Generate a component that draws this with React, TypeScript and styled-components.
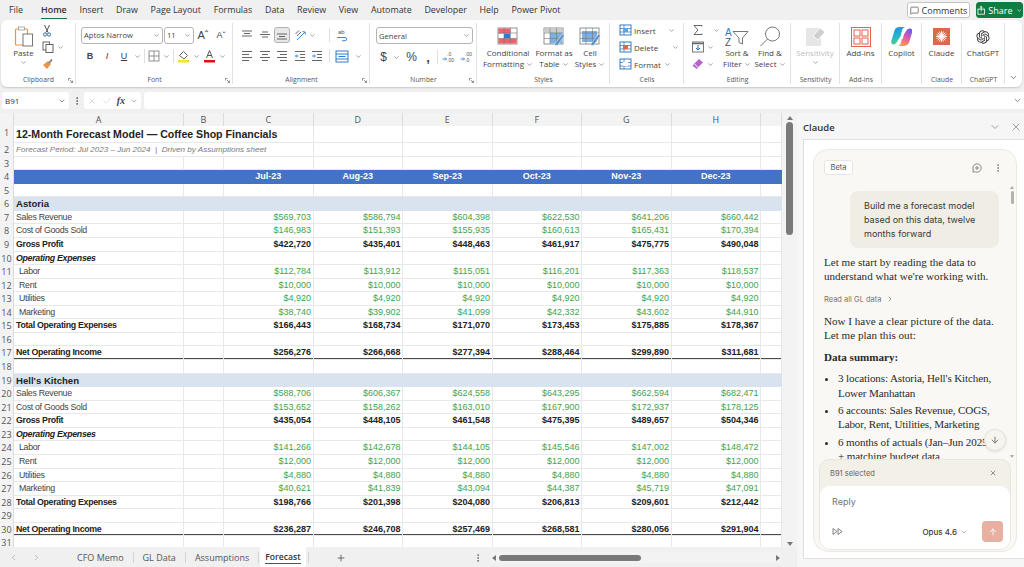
import React, { FunctionComponent, ReactNode } from "react";
import styled, { createGlobalStyle } from "styled-components";
import { RiOpenaiFill } from "react-icons/ri";
import { ChevronDown, ChevronRight, ChevronLeft, X, Check, ArrowDown, ArrowUp, Plus, MessageSquare, EllipsisVertical, MessageCirclePlus } from "lucide-react";

const GlobalStyle = createGlobalStyle`
  html, body { margin: 0; padding: 0; width: 1024px; height: 567px; overflow: hidden; background: #f0f0f0; }
  * { box-sizing: border-box; }
  #root { width: 1024px; height: 567px; font-family: "Open Sans", "Liberation Sans", sans-serif; color: #333; }
`;

const Page = styled.div`
  width: 1024px;
  height: 567px;
  display: flex;
  flex-direction: column;
  background: #f0f0f0;
  overflow: hidden;
`;

/* ---------- top tabs ---------- */
const TabsBar = styled.div`
  height: 20px;
  display: flex;
  align-items: center;
  padding: 0 1px 0 9px;
`;

const MenuTab = styled.div<{ $active?: boolean }>`
  position: relative;
  font-size: 8.9px;
  line-height: 20px;
  margin-right: 12.7px;
  color: #333;
  font-weight: ${(p) => (p.$active ? 600 : 400)};
  &:first-child {
    margin-right: 18px;
  }
  &::after {
    content: "";
    display: ${(p) => (p.$active ? "block" : "none")};
    position: absolute;
    left: 0;
    right: 0;
    bottom: 1px;
    height: 1.5px;
    background: #107c41;
  }
`;

const TopRight = styled.div`
  margin-left: auto;
  display: flex;
  gap: 6px;
`;

const CommentsButton = styled.div`
  width: 63px;
  height: 16px;
  display: flex;
  align-items: center;
  justify-content: center;
  gap: 3px;
  background: #fff;
  border: 1px solid #c4c4c4;
  border-radius: 3px;
  font-size: 9px;
`;

const ShareButton = styled(CommentsButton)`
  width: 47px;
  background: #107c41;
  border-color: #107c41;
  color: #fff;
`;

/* ---------- ribbon ---------- */
const Ribbon = styled.div`
  height: 67px;
  margin: 0 2px 0 1px;
  display: flex;
  background: #fff;
  border-radius: 6px;
  box-shadow: 0 1px 2px rgba(0, 0, 0, 0.18);
  overflow: hidden;
`;

const GroupBox = styled.div<{ $w: number }>`
  position: relative;
  width: ${(p) => p.$w}px;
  flex-shrink: 0;
  display: flex;
  flex-direction: column;
  &::after {
    content: "";
    position: absolute;
    right: 0;
    top: 3px;
    bottom: 3px;
    width: 1px;
    background: #e2e2e2;
  }
`;

const GroupBody = styled.div`
  height: 55px;
  display: flex;
`;

const GroupLabel = styled.div`
  height: 12px;
  line-height: 10px;
  text-align: center;
  font-size: 6.8px;
  color: #555;
`;

const Launcher = styled.svg`
  position: absolute;
  right: 3px;
  bottom: 4px;
  width: 5px;
  height: 5px;
`;

const Big = styled.div<{ $w: number; $ml?: number; $muted?: boolean }>`
  width: ${(p) => p.$w}px;
  margin-left: ${(p) => p.$ml ?? 0}px;
  flex-shrink: 0;
  display: flex;
  flex-direction: column;
  align-items: center;
  padding-top: 5px;
  font-size: 8px;
  line-height: 10.5px;
  text-align: center;
  white-space: nowrap;
  color: ${(p) => (p.$muted ? "#bdbdbd" : "#444")};
`;

const BigIcon = styled.div`
  height: 23px;
  display: flex;
  align-items: center;
  justify-content: center;
`;

const Stack = styled.div<{ $gap?: number; $pad?: number; $left?: number; $w?: number }>`
  ${(p) => (p.$w ? `width: ${p.$w}px; flex-shrink: 0;` : "")}
  display: flex;
  flex-direction: column;
  gap: ${(p) => p.$gap ?? 5}px;
  padding: ${(p) => p.$pad ?? 7}px 0 0 ${(p) => p.$left ?? 5}px;
`;

const IconRow = styled.div<{ $gap?: number; $left?: number }>`
  display: flex;
  align-items: center;
  gap: ${(p) => p.$gap ?? 3}px;
  height: 16px;
  padding-left: ${(p) => p.$left ?? 0}px;
  font-size: 8px;
  color: #444;
  white-space: nowrap;
`;

const Combo = styled.div<{ $w: number; $ml?: number }>`
  width: ${(p) => p.$w}px;
  margin-left: ${(p) => p.$ml ?? 0}px;
  height: 17px;
  flex-shrink: 0;
  display: flex;
  align-items: center;
  justify-content: space-between;
  padding: 0 2px;
  border: 1px solid #b5b5b5;
  border-radius: 3px;
  font-size: 7.6px;
  color: #444;
  white-space: nowrap;
`;

const Sep = styled.div<{ $ml?: number }>`
  width: 1px;
  height: 14px;
  flex-shrink: 0;
  background: #dedede;
  margin-left: ${(p) => p.$ml ?? 0}px;
`;

const Glyph = styled.span<{ $b?: boolean; $i?: boolean; $u?: boolean; $size?: number; $w?: number; $ml?: number }>`
  width: ${(p) => p.$w ?? 14}px;
  margin-left: ${(p) => p.$ml ?? 0}px;
  flex-shrink: 0;
  text-align: center;
  font-family: "Liberation Sans", sans-serif;
  font-size: ${(p) => p.$size ?? 9}px;
  font-weight: ${(p) => (p.$b ? 700 : 400)};
  font-style: ${(p) => (p.$i ? "italic" : "normal")};
  text-decoration: ${(p) => (p.$u ? "underline" : "none")};
  color: #444;
`;

const Selected = styled.div`
  width: 16px;
  height: 16px;
  margin: 0 -2px;
  display: flex;
  align-items: center;
  justify-content: center;
  background: #e8e8e8;
  border: 1px solid #b0b0b0;
  border-radius: 3px;
`;

const ChevSlot = styled.span<{ $ml?: number }>`
  display: inline-flex;
  align-items: center;
  flex-shrink: 0;
  margin-left: ${(p) => p.$ml ?? 0}px;
  vertical-align: middle;
`;

const Chev = ({ ml }: { ml?: number }) => (
  <ChevSlot $ml={ml}>
    <ChevronDown size={7} color="#666" strokeWidth={2} />
  </ChevSlot>
);

const Lines = ({ kind }: { kind: "top" | "mid" | "bot" | "l" | "c" | "r" | "in" | "out" }) => {
  const rows: Record<string, number[][]> = {
    top: [[1, 11, 2], [3, 9, 4.5], [1, 11, 7]],
    mid: [[3, 9, 3], [1, 11, 5.5], [3, 9, 8]],
    bot: [[1, 11, 5], [3, 9, 7.5], [1, 11, 10]],
    l: [[1, 11, 1.5], [1, 8, 4.5], [1, 11, 7.5], [1, 8, 10.5]],
    c: [[1, 11, 1.5], [3, 9, 4.5], [1, 11, 7.5], [3, 9, 10.5]],
    r: [[1, 11, 1.5], [4, 11, 4.5], [1, 11, 7.5], [4, 11, 10.5]],
    in: [[1, 11, 1.5], [6, 11, 4.5], [6, 11, 7.5], [1, 11, 10.5]],
    out: [[1, 11, 1.5], [6, 11, 4.5], [6, 11, 7.5], [1, 11, 10.5]],
  };
  return (
    <svg width="12" height="12" viewBox="0 0 12 12" style={{ flexShrink: 0 }}>
      {rows[kind].map((r, i) => (
        <line key={i} x1={r[0]} x2={r[1]} y1={r[2]} y2={r[2]} stroke="#555" strokeWidth="0.9" />
      ))}
      {kind === "in" && <path d="M1 6h3M3 4.5 4.5 6 3 7.5" stroke="#2b7cd3" fill="none" strokeWidth="0.9" />}
      {kind === "out" && <path d="M4.5 6h-3M3 4.5 1.5 6 3 7.5" stroke="#2b7cd3" fill="none" strokeWidth="0.9" />}
    </svg>
  );
};

const PasteIcon = () => (
  <svg width="20" height="22" viewBox="0 0 20 22">
    <rect x="1.5" y="3" width="12" height="16" rx="1" fill="#fff" stroke="#e8954a" strokeWidth="1.2" />
    <rect x="4.5" y="1" width="6" height="3" fill="#fff" stroke="#999" strokeWidth="0.8" />
    <rect x="9" y="8" width="9.5" height="12" fill="#fff" stroke="#777" strokeWidth="1" />
  </svg>
);

const ScissorsIcon = () => (
  <svg width="10" height="13" viewBox="0 0 10 13" fill="none" stroke="#3a6ea5" strokeWidth="1">
    <path d="M2.5 1 6 8.5M7.5 1 4 8.5" stroke="#555" />
    <circle cx="3" cy="10.5" r="1.6" />
    <circle cx="7" cy="10.5" r="1.6" />
  </svg>
);

const CopyIcon = () => (
  <svg width="12" height="12" viewBox="0 0 12 12" fill="#fff" stroke="#555" strokeWidth="0.9">
    <rect x="1" y="1" width="6.5" height="8" />
    <rect x="4" y="3.5" width="7" height="8" />
  </svg>
);

const BrushIcon = () => (
  <svg width="12" height="12" viewBox="0 0 12 12">
    <path d="M1 7 6 3l3 3-4 5z" fill="#e8954a" />
    <path d="M7 5l3-3.5" stroke="#777" strokeWidth="1.6" />
  </svg>
);

const BordersIcon = () => (
  <svg width="12" height="12" viewBox="0 0 12 12" fill="none" stroke="#777" strokeWidth="0.8" style={{ flexShrink: 0 }}>
    <rect x="1" y="1" width="10" height="10" />
    <path d="M6 1v10M1 6h10" />
  </svg>
);

const FillIcon = () => (
  <svg width="13" height="14" viewBox="0 0 13 14" style={{ flexShrink: 0 }}>
    <path d="M2.5 6.5 6.5 2.5l4 4-3.5 3.5z" fill="#fff" stroke="#555" strokeWidth="0.9" />
    <rect x="1" y="11" width="11" height="2.5" fill="#f5e625" />
  </svg>
);

const FontColorIcon = () => (
  <svg width="13" height="14" viewBox="0 0 13 14" style={{ flexShrink: 0 }}>
    <path d="M3.5 9 6.5 1.5 9.5 9M4.5 6.5h4" fill="none" stroke="#555" strokeWidth="1" />
    <rect x="1" y="11" width="11" height="2.5" fill="#e60f0f" />
  </svg>
);

const OrientIcon = () => (
  <svg width="13" height="12" viewBox="0 0 13 12" fill="none" strokeWidth="0.9" style={{ flexShrink: 0 }}>
    <path d="M3 11 11 3M8.5 2.5 11 3l.5 2.5" stroke="#2b7cd3" />
    <path d="M1.5 5 5 1.5M3 7l4-4" stroke="#555" />
  </svg>
);

const WrapIcon = () => (
  <svg width="14" height="14" viewBox="0 0 14 14" style={{ flexShrink: 0 }}>
    <text x="3" y="6" fontSize="6" fill="#555" fontFamily="Liberation Sans">ab</text>
    <path d="M2 9.5h8a1.6 1.6 0 0 1 0 3.2H7" fill="none" stroke="#2b7cd3" strokeWidth="0.9" />
  </svg>
);

const MergeIcon = () => (
  <svg width="14" height="13" viewBox="0 0 14 13" style={{ flexShrink: 0 }}>
    <rect x="1" y="1" width="12" height="11" fill="#fff" stroke="#1f6fbf" strokeWidth="0.9" />
    <path d="M1 4h12M1 9h12" stroke="#1f6fbf" strokeWidth="0.9" />
    <path d="M3.5 6.5h7" stroke="#2b7cd3" strokeWidth="1" />
  </svg>
);

const DecimalIcon = ({ more }: { more?: boolean }) => (
  <svg width="14" height="12" viewBox="0 0 14 12" style={{ flexShrink: 0 }}>
    <text x="5" y="5" fontSize="5" fill="#555" fontFamily="Liberation Sans">{more ? ".00" : ".0"}</text>
    <text x="5" y="11" fontSize="5" fill="#555" fontFamily="Liberation Sans">{more ? ".0" : ".00"}</text>
    <path d="M0.5 8h4M3 6.5 4.5 8 3 9.5" stroke="#2b7cd3" fill="none" strokeWidth="0.8" />
  </svg>
);

const GridFormatIcon = ({ variant }: { variant: "cond" | "table" | "cell" }) => (
  <svg width="22" height="19" viewBox="0 0 22 19">
    <rect x="1" y="1" width="19" height="16" fill="#fff" stroke="#777" strokeWidth="0.8" />
    {variant === "cond" && (
      <>
        <rect x="1.5" y="1.5" width="12" height="5" fill="#f0616d" />
        <rect x="7" y="6.5" width="6" height="5" fill="#2b7cd3" />
        <rect x="1.5" y="11.5" width="18" height="5" fill="#f0616d" />
      </>
    )}
    {variant === "table" && (
      <>
        <rect x="1.5" y="1.5" width="18" height="4" fill="#ccc" />
        <rect x="7" y="5.5" width="12" height="11" fill="#7db0e8" />
      </>
    )}
    {variant === "cell" && <rect x="3" y="4" width="15" height="11" fill="#7db0e8" />}
    <path d="M1 6h19M1 11.5h19M7 1v16M13.5 1v16" stroke="#777" strokeWidth="0.6" />
    {variant !== "cond" && <path d="M11 18 19.5 7l2 1.4L14.5 18.5z" fill="#5b8fc7" stroke="#fff" strokeWidth="0.5" />}
  </svg>
);

const CellsIcon = ({ color }: { color: string }) => (
  <svg width="13" height="12" viewBox="0 0 13 12" style={{ flexShrink: 0 }}>
    <rect x="1" y="1" width="11" height="10" fill="#fff" stroke="#1f6fbf" strokeWidth="0.9" />
    <path d="M1 4.5h11M1 8h11M5 1v10" stroke="#1f6fbf" strokeWidth="0.7" />
    <rect x="4" y="4" width="5" height="4" fill={color} />
  </svg>
);

const SumIcon = () => (
  <svg width="12" height="12" viewBox="0 0 12 12" fill="none" stroke="#555" strokeWidth="0.9">
    <path d="M10 2.5V1.5H2l4 4.5-4 4.5h8v-1" />
  </svg>
);

const FillDownIcon = () => (
  <svg width="12" height="12" viewBox="0 0 12 12">
    <rect x="0.5" y="1" width="11" height="10" fill="#fff" stroke="#666" strokeWidth="0.9" />
    <path d="M0.5 2.5h11" stroke="#666" strokeWidth="1.4" />
    <path d="M6 4v5M4 7l2 2 2-2" stroke="#1f6fbf" fill="none" strokeWidth="1" />
  </svg>
);

const EraserIcon = () => (
  <svg width="12" height="12" viewBox="0 0 12 12">
    <path d="M0.5 7.5 7 1l4 3.5L4.5 11z" fill="#b565c9" />
    <path d="M2.5 6 6 9.5" stroke="#fff" strokeWidth="1" />
  </svg>
);

const SortIcon = () => (
  <svg width="24" height="21" viewBox="0 0 24 21">
    <text x="0" y="9.5" fontSize="10" fill="#2b7cd3" fontFamily="Liberation Sans">A</text>
    <text x="0" y="20" fontSize="10" fill="#555" fontFamily="Liberation Sans">Z</text>
    <path d="M8 5.5h15l-5.5 6.5v6l-3.5-1.5V12z" fill="#fff" stroke="#666" strokeWidth="0.9" />
  </svg>
);

const FindIcon = () => (
  <svg width="22" height="21" viewBox="0 0 22 21" fill="none" stroke="#666" strokeWidth="0.9">
    <circle cx="13.5" cy="8" r="7" />
    <path d="M8.5 13 1.5 20" />
  </svg>
);

const SensitivityIcon = () => (
  <svg width="21" height="21" viewBox="0 0 21 21">
    <rect x="1" y="2" width="15" height="18" fill="#e6e6e6" />
    <path d="M8 10 15 2l5 4-7 8z" fill="#cfcfcf" stroke="#fff" strokeWidth="0.8" />
  </svg>
);

const AddinsIcon = () => (
  <svg width="20" height="20" viewBox="0 0 20 20" fill="none" stroke="#e0654a" strokeWidth="1">
    <rect x="0.5" y="0.5" width="19" height="19" />
    <rect x="3" y="3" width="6" height="6" />
    <rect x="11" y="3" width="6" height="6" />
    <rect x="3" y="11" width="6" height="6" />
    <rect x="11" y="11" width="6" height="6" />
  </svg>
);

const CopilotIcon = () => (
  <svg width="21" height="21" viewBox="0 0 21 21">
    <defs>
      <linearGradient id="cpA" x1="0.2" y1="0" x2="0.5" y2="1">
        <stop offset="0" stopColor="#1b8fe8" />
        <stop offset="0.6" stopColor="#2cb9c9" />
        <stop offset="1" stopColor="#5fd36a" />
      </linearGradient>
      <linearGradient id="cpB" x1="0.7" y1="0" x2="0.3" y2="1">
        <stop offset="0" stopColor="#6a5cf0" />
        <stop offset="0.5" stopColor="#e45aa8" />
        <stop offset="1" stopColor="#f7a33a" />
      </linearGradient>
    </defs>
    <path d="M8.5 1h5.5c-1.6.4-2.6 1.6-3 3.5l-1.5 6-4 6c-.8 1.3-1.8 2-3.3 2C.6 18.5-.2 16.5.5 14.5L3.5 4.5C4.2 2.3 6 1 8.5 1z" fill="url(#cpA)" />
    <path d="M12.5 20H7c1.6-.4 2.6-1.6 3-3.5l1.5-6 4-6c.8-1.3 1.8-2 3.3-2 2.2 0 3 2 2.3 4l-3 10C17 18.7 15 20 12.5 20z" fill="url(#cpB)" />
    <path d="M10.5 8h2.5l-1.2 5H9.3z" fill="#fff" opacity="0.9" />
  </svg>
);

const ClaudeIcon = () => (
  <svg width="17" height="17" viewBox="0 0 17 17">
    <rect width="17" height="17" fill="#d9694a" />
    <g stroke="#fff" strokeWidth="0.9" strokeLinecap="round">
      {[0, 22, 45, 68, 90, 112, 135, 158].map((a) => (
        <line key={a} x1="8.5" y1="3.5" x2="8.5" y2="13.5" transform={`rotate(${a} 8.5 8.5)`} />
      ))}
    </g>
  </svg>
);

const SendAheadIcon = () => (
  <svg width="11" height="9" viewBox="0 0 11 9" fill="none" stroke="#77746c" strokeWidth="0.9">
    <path d="M1 1.5v6L5 4.5zM6 1.5v6l4-3z" />
  </svg>
);

const LaunchGlyph = () => (
  <Launcher viewBox="0 0 5 5" fill="none" stroke="#666" strokeWidth="0.7">
    <path d="M0.5 2.5v-2h2M2 2l2.5 2.5M2.5 4.6h2v-2" />
  </Launcher>
);

type GroupProps = { w: number; label?: string; launcher?: boolean; children: ReactNode };

const Group: FunctionComponent<GroupProps> = ({ w, label, launcher, children }) => (
  <GroupBox $w={w}>
    <GroupBody>{children}</GroupBody>
    <GroupLabel>{label}</GroupLabel>
    {launcher && <LaunchGlyph />}
  </GroupBox>
);

const CollapseSlot = styled.div`
  flex: 1;
  display: flex;
  align-items: flex-end;
  justify-content: center;
  padding-bottom: 5px;
`;

/* ---------- formula bar ---------- */
const FormulaBar = styled.div`
  height: 17px;
  margin-top: 5px;
  display: flex;
  align-items: stretch;
  padding-left: 2px;
`;

const NameBox = styled.div`
  width: 67px;
  display: flex;
  align-items: center;
  justify-content: space-between;
  padding: 0 3px;
  background: #fff;
  border-radius: 3px;
  font-size: 8px;
  color: #333;
`;

const Dots = styled.div`
  width: 15px;
  display: flex;
  align-items: center;
  justify-content: center;
`;

const FxBox = styled.div`
  width: 57px;
  display: flex;
  align-items: center;
  gap: 5px;
  padding: 0 3px;
  background: #fff;
  border-radius: 3px;
`;

const FxLabel = styled.span`
  font-family: "Liberation Serif", serif;
  font-style: italic;
  font-weight: 700;
  font-size: 10px;
  color: #444;
`;

const FormulaInput = styled.div`
  flex: 1;
  margin-left: 3px;
  display: flex;
  align-items: center;
  justify-content: flex-end;
  padding-right: 2px;
  background: #fff;
  border-radius: 3px 0 0 3px;
`;

/* ---------- main area ---------- */
const Main = styled.div`
  flex: 1;
  margin-top: 4px;
  display: flex;
  min-height: 0;
`;

const SheetColumn = styled.div`
  width: 797px;
  display: flex;
  flex-direction: column;
`;

const SheetWrap = styled.div`
  height: 434px;
  display: flex;
  background: #fff;
`;

const SheetGrid = styled.div`
  width: 782px;
  display: flex;
  flex-direction: column;
  overflow: hidden;
`;

const COLUMNS = "14px 170px 40px 89.5px 89.5px 89.5px 89.5px 89.5px 89.5px 21px";

const RowLine = styled.div<{ $h?: number; $bg?: string; $thick?: boolean }>`
  height: ${(p) => p.$h ?? 13.57}px;
  flex-shrink: 0;
  display: grid;
  grid-template-columns: ${COLUMNS};
  background: ${(p) => p.$bg ?? "#fff"};
  box-shadow: ${(p) => (p.$thick ? "inset 0 -2px 0 #4a4a4a" : "none")};
`;

const ColHead = styled.div`
  background: #f3f3f3;
  border-right: 1px solid #dcdcdc;
  border-bottom: 1px solid #d0d0d0;
  text-align: center;
  font-size: 9px;
  line-height: 13px;
  color: #555;
`;

const RowNum = styled.div`
  background: #f3f3f3;
  border-right: 1px solid #dcdcdc;
  text-align: center;
  font-size: 9px;
  line-height: 13.5px;
  color: #555;
  white-space: nowrap;
  overflow: hidden;
`;

const Cell = styled.div<{
  $b?: boolean;
  $i?: boolean;
  $right?: boolean;
  $center?: boolean;
  $label?: boolean;
  $size?: number;
  $color?: string;
  $fill?: boolean;
  $indent?: number;
  $span?: number;
}>`
  grid-column: span ${(p) => p.$span ?? 1};
  padding: 0 ${(p) => (p.$right ? 1.5 : 2)}px 0 ${(p) => 2 + (p.$indent ?? 0)}px;
  border-right: 1px solid ${(p) => (p.$fill ? "transparent" : "#e8e8e8")};
  border-bottom: 1px solid ${(p) => (p.$fill ? "transparent" : "#e8e8e8")};
  font-family: "Liberation Sans", sans-serif;
  font-size: ${(p) => p.$size ?? (p.$label ? 8.8 : 9)}px;
  letter-spacing: ${(p) => (p.$label ? -0.3 : 0)}px;
  line-height: 13px;
  font-weight: ${(p) => (p.$b ? 700 : 400)};
  font-style: ${(p) => (p.$i ? "italic" : "normal")};
  text-align: ${(p) => (p.$right ? "right" : p.$center ? "center" : "left")};
  color: ${(p) => p.$color ?? "#333"};
  white-space: nowrap;
  overflow: hidden;
`;

const TitleText = styled.span`
  font-size: 10.6px;
  font-weight: 700;
  line-height: 17px;
  color: #222;
`;

const SubtitleText = styled.span`
  font-size: 8.1px;
  font-style: italic;
  color: #7a7a7a;
  white-space: pre;
`;

const VScroll = styled.div`
  width: 15px;
  display: flex;
  flex-direction: column;
  align-items: center;
  background: #f3f3f3;
  padding: 3px 2px 1px;
`;

const ScrollArrow = styled.div<{ $dir: "up" | "down" | "left" | "right" }>`
  width: 0;
  height: 0;
  flex-shrink: 0;
  border-style: solid;
  border-color: transparent;
  border-width: 3px;
  ${(p) =>
    p.$dir === "up"
      ? "border-bottom: 4px solid #777; border-top-width: 0;"
      : p.$dir === "down"
        ? "border-top: 4px solid #777; border-bottom-width: 0;"
        : p.$dir === "left"
          ? "border-right: 4px solid #777; border-left-width: 0;"
          : "border-left: 4px solid #777; border-right-width: 0;"}
`;

const VThumb = styled.div`
  width: 7px;
  height: 113px;
  margin-top: 2px;
  background: #7a7a7a;
  border-radius: 4px;
`;

const VSpacer = styled.div`
  flex: 1;
`;

const SheetTabs = styled.div`
  height: 21px;
  display: flex;
  align-items: stretch;
  padding-left: 9px;
  font-size: 9px;
  color: #555;
`;

const NavArrows = styled.div`
  width: 59px;
  display: flex;
  align-items: center;
  gap: 14px;
  flex-shrink: 0;
`;

const SheetTab = styled.div<{ $active?: boolean }>`
  position: relative;
  height: ${(p) => (p.$active ? 20 : 21)}px;
  display: flex;
  align-items: center;
  padding: 0 ${(p) => (p.$active ? 5 : 9)}px;
  margin-left: ${(p) => (p.$active ? 1 : 0)}px;
  background: ${(p) => (p.$active ? "#fff" : "transparent")};
  border-radius: 0 0 3px 3px;
  font-weight: ${(p) => (p.$active ? 600 : 400)};
  font-size: ${(p) => (p.$active ? 8.6 : 9)}px;
  color: ${(p) => (p.$active ? "#333" : "#555")};
  white-space: nowrap;
  &::after {
    content: "";
    display: ${(p) => (p.$active ? "block" : "none")};
    position: absolute;
    left: 5px;
    right: 5px;
    bottom: 3px;
    height: 1.5px;
    background: #107c41;
  }
`;

const TabSep = styled.div<{ $ml?: number }>`
  width: 1px;
  height: 11px;
  margin: 5px 0 0 ${(p) => p.$ml ?? 0}px;
  background: #d4d4d4;
`;

const AddSheet = styled.div`
  width: 64px;
  display: flex;
  align-items: center;
  justify-content: center;
`;

const TabDots = styled.div`
  margin-left: auto;
  width: 14px;
  display: flex;
  align-items: center;
  justify-content: center;
`;

const HScroll = styled.div`
  width: 290px;
  height: 11px;
  margin: 5px 16px 0 6px;
  display: flex;
  align-items: center;
  padding: 0 1px;
  background: #f3f3f3;
`;

const HThumb = styled.div`
  width: 142px;
  height: 6px;
  margin-left: 3px;
  background: #7a7a7a;
  border-radius: 3px;
`;

/* ---------- claude panel ---------- */
const Panel = styled.div`
  flex: 1;
  display: flex;
  flex-direction: column;
  background: #f6f6f6;
  padding-left: 6px;
`;

const PanelHead = styled.div`
  height: 26px;
  display: flex;
  align-items: center;
  gap: 9px;
  padding: 2px 2px 0 0;
  font-size: 9.5px;
  font-weight: 600;
  color: #333;
`;

const PanelTitle = styled.div`
  flex: 1;
`;

const PanelBody = styled.div`
  height: 420px;
  padding: 9px 7px 7px 9px;
  background: #fff;
  border: 1px solid #e0e0e0;
  border-right: none;
`;

const ChatCard = styled.div`
  position: relative;
  height: 403px;
  display: flex;
  flex-direction: column;
  background: #faf8f5;
  border: 1px solid #ece9e1;
  border-radius: 15px;
  overflow: hidden;
`;

const ChatHead = styled.div`
  height: 35px;
  flex-shrink: 0;
  display: flex;
  align-items: center;
  justify-content: space-between;
  padding: 0 13px 0 10px;
`;

const BetaChip = styled.div`
  width: 29px;
  height: 15px;
  display: flex;
  align-items: center;
  justify-content: center;
  background: #fff;
  border: 1px solid #e8e5dc;
  border-radius: 3px;
  font-family: "Inter", sans-serif;
  font-size: 7.5px;
  color: #555;
`;

const ChatHeadIcons = styled.div`
  display: flex;
  align-items: center;
  gap: 11px;
`;

const ChatScroll = styled.div`
  position: relative;
  height: 274px;
  flex-shrink: 0;
  padding: 6px 10px 0;
  overflow: hidden;
`;

const Bubble = styled.div`
  width: 149px;
  height: 57px;
  margin-left: 26px;
  padding: 8px 14px;
  background: #f0ede4;
  border-radius: 8px;
  font-family: "Inter", sans-serif;
  font-size: 9px;
  line-height: 13.8px;
  color: #3a3a36;
`;

const Prose = styled.p<{ $top?: number; $b?: boolean }>`
  margin: ${(p) => p.$top ?? 0}px 0 0;
  font-family: "Liberation Serif", serif;
  font-size: 11.1px;
  line-height: 14.3px;
  font-weight: ${(p) => (p.$b ? 700 : 400)};
  color: #2b2a27;
  white-space: nowrap;
`;

const ToolLink = styled.div`
  margin-top: 11px;
  display: flex;
  align-items: center;
  gap: 5px;
  font-family: "Inter", sans-serif;
  font-size: 7.5px;
  color: #77746c;
`;

const BulletList = styled.ul`
  margin: 7px 0 0;
  padding: 0 0 0 14px;
  font-family: "Liberation Serif", serif;
  font-size: 11.1px;
  letter-spacing: -0.13px;
  line-height: 14.3px;
  color: #2b2a27;
  white-space: nowrap;
`;

const BulletItem = styled.li`
  margin-bottom: 3px;
`;

const MiniScrollbar = styled.div`
  position: absolute;
  right: 2px;
  top: 0;
  bottom: 0;
  width: 4px;
  display: flex;
  flex-direction: column;
  align-items: center;
  padding: 1px 0;
`;

const MiniThumb = styled.div`
  width: 3px;
  height: 13px;
  margin-top: 2px;
  background: #b5b2aa;
  border-radius: 2px;
`;

const MiniArrow = styled.div<{ $down?: boolean }>`
  border-left: 2px solid transparent;
  border-right: 2px solid transparent;
  ${(p) => (p.$down ? "border-top: 3px solid #aaa;" : "border-bottom: 3px solid #aaa;")}
`;

const ScrollDown = styled.div`
  position: absolute;
  right: 10px;
  bottom: 8px;
  width: 22px;
  height: 22px;
  display: flex;
  align-items: center;
  justify-content: center;
  background: #f7f5f0;
  border: 1px solid #e6e3da;
  border-radius: 50%;
  box-shadow: 0 1px 3px rgba(0, 0, 0, 0.1);
`;

const Composer = styled.div`
  margin: 0 5px;
  height: 91px;
  display: flex;
  flex-direction: column;
  background: #f3f0e8;
  border: 1px solid #e9e6dd;
  border-radius: 10px 10px 12px 12px;
`;

const ContextRow = styled.div`
  height: 26px;
  flex-shrink: 0;
  display: flex;
  align-items: center;
  justify-content: space-between;
  padding: 0 13px 0 10px;
  font-family: "Inter", sans-serif;
  font-size: 7.5px;
  color: #66635b;
`;

const InputCard = styled.div`
  flex: 1;
  display: flex;
  flex-direction: column;
  background: #fff;
  border-radius: 10px;
  padding: 10px 7px 7px 12px;
`;

const ReplyHint = styled.div`
  flex: 1;
  font-family: "Inter", sans-serif;
  font-size: 9px;
  color: #77746c;
`;

const InputTools = styled.div`
  display: flex;
  align-items: center;
  justify-content: space-between;
`;

const ModelGroup = styled.div`
  margin-left: auto;
  margin-right: 14px;
  display: flex;
  align-items: center;
  gap: 3px;
  font-family: "Inter", sans-serif;
  font-size: 8px;
  font-weight: 500;
  color: #3a3a36;
`;

const SendButton = styled.div`
  width: 21px;
  height: 21px;
  display: flex;
  align-items: center;
  justify-content: center;
  background: #e8b0a0;
  border-radius: 4px;
`;

const menuTabs = ["File", "Home", "Insert", "Draw", "Page Layout", "Formulas", "Data", "Review", "View", "Automate", "Developer", "Help", "Power Pivot"];
const months = ["Jul-23", "Aug-23", "Sep-23", "Oct-23", "Nov-23", "Dec-23"];
const letters = ["A", "B", "C", "D", "E", "F", "G", "H", ""];

type SheetRow =
  | { kind: "blank"; thick?: boolean }
  | { kind: "title" }
  | { kind: "subtitle" }
  | { kind: "months" }
  | { kind: "section"; label: string }
  | { kind: "heading"; label: string }
  | { kind: "data"; label: string; values: number[]; bold?: boolean; indent?: boolean; thick?: boolean };

const flat = (n: number) => [n, n, n, n, n, n];

const locationRows = (name: string, r: number[][]): SheetRow[] => [
  { kind: "section", label: name },
  { kind: "data", label: "Sales Revenue", values: r[0] },
  { kind: "data", label: "Cost of Goods Sold", values: r[1] },
  { kind: "data", label: "Gross Profit", values: r[2], bold: true },
  { kind: "heading", label: "Operating Expenses" },
  { kind: "data", label: "Labor", values: r[3], indent: true },
  { kind: "data", label: "Rent", values: r[4], indent: true },
  { kind: "data", label: "Utilities", values: r[5], indent: true },
  { kind: "data", label: "Marketing", values: r[6], indent: true },
  { kind: "data", label: "Total Operating Expenses", values: r[7], bold: true },
  { kind: "blank" },
  { kind: "data", label: "Net Operating Income", values: r[8], bold: true, thick: true },
];

const sheetRows: SheetRow[] = [
  { kind: "title" },
  { kind: "subtitle" },
  { kind: "blank" },
  { kind: "months" },
  { kind: "blank" },
  ...locationRows("Astoria", [
    [569703, 586794, 604398, 622530, 641206, 660442],
    [146983, 151393, 155935, 160613, 165431, 170394],
    [422720, 435401, 448463, 461917, 475775, 490048],
    [112784, 113912, 115051, 116201, 117363, 118537],
    flat(10000),
    flat(4920),
    [38740, 39902, 41099, 42332, 43602, 44910],
    [166443, 168734, 171070, 173453, 175885, 178367],
    [256276, 266668, 277394, 288464, 299890, 311681],
  ]),
  { kind: "blank" },
  ...locationRows("Hell's Kitchen", [
    [588706, 606367, 624558, 643295, 662594, 682471],
    [153652, 158262, 163010, 167900, 172937, 178125],
    [435054, 448105, 461548, 475395, 489657, 504346],
    [141266, 142678, 144105, 145546, 147002, 148472],
    flat(12000),
    flat(4880),
    [40621, 41839, 43094, 44387, 45719, 47091],
    [198766, 201398, 204080, 206813, 209601, 212442],
    [236287, 246708, 257469, 268581, 280056, 291904],
  ]),
  { kind: "blank" },
];

const money = (n: number) => "$" + n.toLocaleString("en-US");

const renderRow = (row: SheetRow, i: number) => {
  const num = <RowNum>{i + 1}</RowNum>;
  switch (row.kind) {
    case "title":
      return (
        <RowLine key={i} $h={17}>
          {num}
          <Cell $span={3}>
            <TitleText>12-Month Forecast Model — Coffee Shop Financials</TitleText>
          </Cell>
          {letters.slice(3).map((l, k) => (
            <Cell key={k} />
          ))}
        </RowLine>
      );
    case "subtitle":
      return (
        <RowLine key={i}>
          {num}
          <Cell $span={3}>
            <SubtitleText>Forecast Period: Jul 2023 – Jun 2024  |  Driven by Assumptions sheet</SubtitleText>
          </Cell>
          {letters.slice(3).map((l, k) => (
            <Cell key={k} />
          ))}
        </RowLine>
      );
    case "months":
      return (
        <RowLine key={i} $bg="#4472c4">
          {num}
          <Cell $fill />
          <Cell $fill />
          {months.map((m) => (
            <Cell key={m} $fill $b $center $color="#fff">
              {m}
            </Cell>
          ))}
          <Cell $fill />
        </RowLine>
      );
    case "section":
      return (
        <RowLine key={i} $bg="#d9e2ef">
          {num}
          <Cell $fill $b $size={9.6} $color="#222">
            {row.label}
          </Cell>
          {letters.slice(1).map((l, k) => (
            <Cell key={k} $fill />
          ))}
        </RowLine>
      );
    case "heading":
      return (
        <RowLine key={i}>
          {num}
          <Cell $b $i $label $color="#222">
            {row.label}
          </Cell>
          {letters.slice(1).map((l, k) => (
            <Cell key={k} />
          ))}
        </RowLine>
      );
    case "data":
      return (
        <RowLine key={i} $thick={row.thick}>
          {num}
          <Cell $b={row.bold} $label $indent={row.indent ? 3 : 0} $color={row.bold ? "#222" : "#444"}>
            {row.label}
          </Cell>
          <Cell />
          {row.values.map((v, k) => (
            <Cell key={k} $right $b={row.bold} $color={row.bold ? "#222" : "#3fa34d"}>
              {money(v)}
            </Cell>
          ))}
          <Cell />
        </RowLine>
      );
    default:
      return (
        <RowLine key={i}>
          {num}
          {letters.map((l, k) => (
            <Cell key={k} />
          ))}
        </RowLine>
      );
  }
};

const App: FunctionComponent = () => {
  return (
    <Page>
      <GlobalStyle />
      <TabsBar>
        {menuTabs.map((t) => (
          <MenuTab key={t} $active={t === "Home"}>
            {t}
          </MenuTab>
        ))}
        <TopRight>
          <CommentsButton>
            <MessageSquare size={9} color="#555" />
            Comments
          </CommentsButton>
          <ShareButton>
            <svg width="9" height="10" viewBox="0 0 9 10" fill="none" stroke="#fff" strokeWidth="0.9">
              <rect x="1" y="4" width="7" height="5.5" />
              <path d="M4.5 6.5V1M3 2.5 4.5 1 6 2.5" />
            </svg>
            Share
            <ChevronDown size={7} color="#fff" />
          </ShareButton>
        </TopRight>
      </TabsBar>

      <Ribbon>
        <Group w={75} label="Clipboard" launcher>
          <Big $w={37} $ml={4}>
            <BigIcon>
              <PasteIcon />
            </BigIcon>
            Paste
            <Chev />
          </Big>
          <Stack $gap={1} $pad={2} $left={0}>
            <IconRow>
              <ScissorsIcon />
            </IconRow>
            <IconRow>
              <CopyIcon />
              <Chev />
            </IconRow>
            <IconRow>
              <BrushIcon />
            </IconRow>
          </Stack>
        </Group>
        <Group w={157} label="Font" launcher>
          <Stack>
            <IconRow $gap={1}>
              <Combo $w={82}>
                Aptos Narrow
                <Chev />
              </Combo>
              <Combo $w={30}>
                11
                <Chev />
              </Combo>
              <Glyph $size={11} $w={16}>Aˆ</Glyph>
              <Glyph $size={9} $w={14} $ml={2}>Aˇ</Glyph>
            </IconRow>
            <IconRow $gap={3} $left={2}>
              <Glyph $b>B</Glyph>
              <Glyph $i>I</Glyph>
              <Glyph $u>U</Glyph>
              <Chev />
              <Sep />
              <BordersIcon />
              <Chev />
              <Sep />
              <FillIcon />
              <Chev />
              <FontColorIcon />
              <Chev />
            </IconRow>
          </Stack>
        </Group>
        <Group w={137} label="Alignment" launcher>
          <Stack>
            <IconRow $gap={5.5} $left={3}>
              <Lines kind="top" />
              <Lines kind="mid" />
              <Selected>
                <Lines kind="bot" />
              </Selected>
              <OrientIcon />
              <Chev ml={-3} />
              <Sep $ml={7} />
              <WrapIcon />
            </IconRow>
            <IconRow $gap={5.5} $left={3}>
              <Lines kind="l" />
              <Lines kind="c" />
              <Lines kind="r" />
              <Lines kind="out" />
              <Lines kind="in" />
              <Sep />
              <MergeIcon />
              <Chev />
            </IconRow>
          </Stack>
        </Group>
        <Group w={107} label="Number" launcher>
          <Stack>
            <Combo $w={97} $ml={1}>
              General
              <Chev />
            </Combo>
            <IconRow $gap={4} $left={3}>
              <Glyph $size={12} $w={11}>$</Glyph>
              <Chev />
              <Glyph $size={12} $w={15}>%</Glyph>
              <Glyph $b $size={13} $w={10}>,</Glyph>
              <Sep />
              <DecimalIcon />
              <DecimalIcon more />
            </IconRow>
          </Stack>
        </Group>
        <Group w={133} label="Styles">
          <Big $w={56} $ml={3}>
            <BigIcon>
              <GridFormatIcon variant="cond" />
            </BigIcon>
            Conditional
            <br />
            <span>
              Formatting <Chev />
            </span>
          </Big>
          <Big $w={36}>
            <BigIcon>
              <GridFormatIcon variant="table" />
            </BigIcon>
            Format as
            <br />
            <span>
              Table <Chev />
            </span>
          </Big>
          <Big $w={36}>
            <BigIcon>
              <GridFormatIcon variant="cell" />
            </BigIcon>
            Cell
            <br />
            <span>
              Styles <Chev />
            </span>
          </Big>
        </Group>
        <Group w={74} label="Cells">
          <Stack $gap={1} $pad={2} $left={9}>
            <IconRow $gap={2}>
              <CellsIcon color="#5ba4e6" />
              Insert
              <Chev ml={10} />
            </IconRow>
            <IconRow $gap={2}>
              <CellsIcon color="#e0654a" />
              Delete
              <Chev ml={12} />
            </IconRow>
            <IconRow $gap={2}>
              <CellsIcon color="#fff" />
              Format
              <Chev ml={1} />
            </IconRow>
          </Stack>
        </Group>
        <Group w={107} label="Editing">
          <Stack $gap={1} $pad={2} $left={8} $w={37}>
            <IconRow>
              <SumIcon />
              <Chev ml={6} />
            </IconRow>
            <IconRow>
              <FillDownIcon />
              <Chev />
            </IconRow>
            <IconRow>
              <EraserIcon />
              <Chev />
            </IconRow>
          </Stack>
          <Big $w={32}>
            <BigIcon>
              <SortIcon />
            </BigIcon>
            Sort &amp;
            <br />
            <span>
              Filter <Chev />
            </span>
          </Big>
          <Big $w={34}>
            <BigIcon>
              <FindIcon />
            </BigIcon>
            Find &amp;
            <br />
            <span>
              Select <Chev />
            </span>
          </Big>
        </Group>
        <Group w={49} label="Sensitivity">
          <Big $w={48} $muted>
            <BigIcon>
              <SensitivityIcon />
            </BigIcon>
            Sensitivity
            <Chev />
          </Big>
        </Group>
        <Group w={42} label="Add-ins">
          <Big $w={41}>
            <BigIcon>
              <AddinsIcon />
            </BigIcon>
            Add-ins
          </Big>
        </Group>
        <Group w={40}>
          <Big $w={39}>
            <BigIcon>
              <CopilotIcon />
            </BigIcon>
            Copilot
          </Big>
        </Group>
        <Group w={40} label="Claude">
          <Big $w={39}>
            <BigIcon>
              <ClaudeIcon />
            </BigIcon>
            Claude
          </Big>
        </Group>
        <Group w={43} label="ChatGPT">
          <Big $w={42}>
            <BigIcon>
              <RiOpenaiFill size={16} color="#333" />
            </BigIcon>
            ChatGPT
          </Big>
        </Group>
        <CollapseSlot>
          <ChevronDown size={9} color="#555" />
        </CollapseSlot>
      </Ribbon>

      <FormulaBar>
        <NameBox>
          B91
          <ChevronDown size={8} color="#555" />
        </NameBox>
        <Dots>
          <EllipsisVertical size={10} color="#555" />
        </Dots>
        <FxBox>
          <X size={10} color="#bbb" strokeWidth={1.2} />
          <Check size={10} color="#bbb" strokeWidth={1.2} />
          <FxLabel>fx</FxLabel>
          <ChevronDown size={8} color="#888" />
        </FxBox>
        <FormulaInput>
          <ChevronDown size={9} color="#666" />
        </FormulaInput>
      </FormulaBar>

      <Main>
        <SheetColumn>
          <SheetWrap>
            <SheetGrid>
              <RowLine $h={13}>
                <ColHead />
                {letters.map((l, i) => (
                  <ColHead key={i}>{l}</ColHead>
                ))}
              </RowLine>
              {sheetRows.map(renderRow)}
            </SheetGrid>
            <VScroll>
              <ScrollArrow $dir="up" />
              <VThumb />
              <VSpacer />
              <ScrollArrow $dir="down" />
            </VScroll>
          </SheetWrap>
          <SheetTabs>
            <NavArrows>
              <ChevronLeft size={9} color="#aaa" />
              <ChevronRight size={9} color="#aaa" />
            </NavArrows>
            <SheetTab>CFO Memo</SheetTab>
            <TabSep />
            <SheetTab>GL Data</SheetTab>
            <TabSep />
            <SheetTab>Assumptions</SheetTab>
            <TabSep />
            <SheetTab $active>Forecast</SheetTab>
            <TabSep $ml={2} />
            <AddSheet>
              <Plus size={10} color="#555" />
            </AddSheet>
            <TabDots>
              <EllipsisVertical size={10} color="#666" />
            </TabDots>
            <HScroll>
              <ScrollArrow $dir="left" />
              <HThumb />
              <VSpacer />
              <ScrollArrow $dir="right" />
            </HScroll>
          </SheetTabs>
        </SheetColumn>

        <Panel>
          <PanelHead>
            <PanelTitle>Claude</PanelTitle>
            <ChevronDown size={12} color="#666" strokeWidth={1.2} />
            <X size={12} color="#666" strokeWidth={1.2} />
          </PanelHead>
          <PanelBody>
            <ChatCard>
              <ChatHead>
                <BetaChip>Beta</BetaChip>
                <ChatHeadIcons>
                  <MessageCirclePlus size={10} color="#77746c" />
                  <EllipsisVertical size={10} color="#77746c" />
                </ChatHeadIcons>
              </ChatHead>
              <ChatScroll>
                <Bubble>
                  Build me a forecast model
                  <br />
                  based on this data, twelve
                  <br />
                  months forward
                </Bubble>
                <Prose $top={7}>
                  Let me start by reading the data to
                  <br />
                  understand what we're working with.
                </Prose>
                <ToolLink>
                  Read all GL data
                  <ChevronRight size={8} color="#77746c" />
                </ToolLink>
                <Prose $top={10}>
                  Now I have a clear picture of the data.
                  <br />
                  Let me plan this out:
                </Prose>
                <Prose $top={8} $b>
                  Data summary:
                </Prose>
                <BulletList>
                  <BulletItem>
                    3 locations: Astoria, Hell's Kitchen,
                    <br />
                    Lower Manhattan
                  </BulletItem>
                  <BulletItem>
                    6 accounts: Sales Revenue, COGS,
                    <br />
                    Labor, Rent, Utilities, Marketing
                  </BulletItem>
                  <BulletItem>
                    6 months of actuals (Jan–Jun 2025
                    <br />+ matching budget data
                  </BulletItem>
                </BulletList>
                <MiniScrollbar>
                  <MiniArrow />
                  <MiniThumb />
                  <VSpacer />
                  <MiniArrow $down />
                </MiniScrollbar>
                <ScrollDown>
                  <ArrowDown size={10} color="#66635b" />
                </ScrollDown>
              </ChatScroll>
              <Composer>
                <ContextRow>
                  B91 selected
                  <X size={8} color="#66635b" />
                </ContextRow>
                <InputCard>
                  <ReplyHint>Reply</ReplyHint>
                  <InputTools>
                    <SendAheadIcon />
                    <ModelGroup>
                      Opus 4.6
                      <ChevronDown size={8} color="#99968d" />
                    </ModelGroup>
                    <SendButton>
                      <ArrowUp size={10} color="#fff" />
                    </SendButton>
                  </InputTools>
                </InputCard>
              </Composer>
            </ChatCard>
          </PanelBody>
        </Panel>
      </Main>
    </Page>
  );
};

export default App;
